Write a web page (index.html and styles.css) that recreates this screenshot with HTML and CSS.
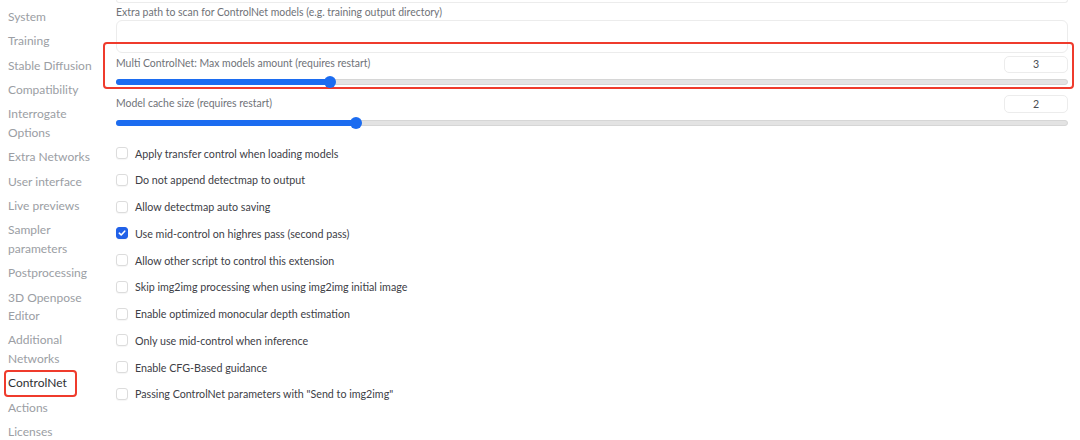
FILE: index.html
```html
<!DOCTYPE html>
<html>
<head>
<meta charset="utf-8">
<link rel="stylesheet" href="styles.css">
</head>
<body>
<div class="app">
  <nav class="sidebar">
    <div class="nav-item">System</div>
    <div class="nav-item">Training</div>
    <div class="nav-item">Stable Diffusion</div>
    <div class="nav-item">Compatibility</div>
    <div class="nav-item">Interrogate Options</div>
    <div class="nav-item">Extra Networks</div>
    <div class="nav-item">User interface</div>
    <div class="nav-item">Live previews</div>
    <div class="nav-item">Sampler parameters</div>
    <div class="nav-item">Postprocessing</div>
    <div class="nav-item">3D Openpose Editor</div>
    <div class="nav-item">Additional Networks</div>
    <div class="nav-item active">ControlNet</div>
    <div class="nav-item">Actions</div>
    <div class="nav-item">Licenses</div>
  </nav>
  <main class="main">
    <div class="prev-box"></div>
    <div class="field">
      <div class="label">Extra path to scan for ControlNet models (e.g. training output directory)</div>
      <div class="textbox"></div>
    </div>
    <div class="highlight">
      <div class="slider-field">
        <div class="slider-head">
          <div class="label">Multi ControlNet: Max models amount (requires restart)</div>
          <div class="numbox">3</div>
        </div>
        <div class="track"><div class="fill" style="width:22.5%"><span class="thumb"></span></div></div>
      </div>
    </div>
    <div class="slider-field second">
      <div class="slider-head">
        <div class="label">Model cache size (requires restart)</div>
        <div class="numbox">2</div>
      </div>
      <div class="track"><div class="fill" style="width:25.3%"><span class="thumb"></span></div></div>
    </div>
    <div class="checks">
      <label class="check"><span class="box"></span>Apply transfer control when loading models</label>
      <label class="check"><span class="box"></span>Do not append detectmap to output</label>
      <label class="check"><span class="box"></span>Allow detectmap auto saving</label>
      <label class="check"><span class="box checked"><svg viewBox="0 0 12 12" width="12" height="12"><path d="M3.3 6.2 L5.2 8 L8.7 4.2" fill="none" stroke="#fff" stroke-width="1.6" stroke-linecap="round" stroke-linejoin="round"/></svg></span>Use mid-control on highres pass (second pass)</label>
      <label class="check"><span class="box"></span>Allow other script to control this extension</label>
      <label class="check"><span class="box"></span>Skip img2img processing when using img2img initial image</label>
      <label class="check"><span class="box"></span>Enable optimized monocular depth estimation</label>
      <label class="check"><span class="box"></span>Only use mid-control when inference</label>
      <label class="check"><span class="box"></span>Enable CFG-Based guidance</label>
      <label class="check"><span class="box"></span>Passing ControlNet parameters with "Send to img2img"</label>
    </div>
  </main>
</div>
</body>
</html>
```
FILE: styles.css
```css
* { box-sizing: border-box; }
html, body { margin: 0; padding: 0; background: #fff; }
body {
  font-family: "Source Sans Pro", Lato, "Liberation Sans", sans-serif;
  width: 1080px;
  height: 440px;
  overflow: hidden;
}
.app {
  display: flex;
  align-items: flex-start;
}
.sidebar {
  width: 106px;
  padding: 7.8px 0 0 8px;
  display: flex;
  flex-direction: column;
  gap: 6px;
  flex: none;
}
.nav-item {
  width: 92px;
  font-size: 12px;
  line-height: 18.4px;
  color: #9b9ea4;
}
.nav-item.active {
  color: #2e2f33;
  width: 73px;
  margin: -4px 0 -4px -4px;
  padding: 2px 2px;
  border: 2px solid #ef3b2c;
  border-radius: 4px;
}
.main {
  flex: 1;
  padding-right: 12px;
  display: flex;
  flex-direction: column;
}
.prev-box {
  margin-left: 10px;
  height: 3px;
  border: 1px solid #ececec;
  border-top: none;
  border-radius: 0 0 5px 5px;
}
.field { padding: 2px 0 0 10px; }
.label {
  font-size: 10.45px;
  line-height: 14px;
  color: #6f7278;
}
.textbox {
  margin-top: 1px;
  height: 33px;
  border: 1px solid #ececec;
  border-radius: 6px;
  background: #fff;
}
.highlight {
  margin-top: -11px;
  margin-left: -3px;
  margin-right: -6px;
  border: 2px solid #ef3b2c;
  border-radius: 4px;
  padding: 12px 4px 2px 11px;
}
.slider-field.second { margin-top: 6px; padding-left: 10px; }
.slider-head {
  display: flex;
  align-items: flex-start;
  justify-content: space-between;
  height: 17px;
}
.second .slider-head { height: 18px; }
.second .slider-head .label { margin-top: 1px; }
.numbox {
  width: 64px;
  height: 17px;
  border: 1px solid #ececec;
  border-radius: 5px;
  font-size: 10.6px;
  line-height: 15px;
  text-align: center;
  color: #4a4d52;
}
.second .numbox { height: 18px; line-height: 16px; }
.track {
  margin-top: 6px;
  height: 6px;
  background: #e3e3e3;
  border: 1px solid #d6d6d6;
  border-radius: 3px;
  position: relative;
}
.second .track { margin-top: 7px; }
.fill {
  height: 6px;
  margin: -1px 0 0 -1px;
  background: #1c6cf0;
  border-radius: 3px;
  position: relative;
}
.thumb {
  position: absolute;
  right: -6px;
  top: -3px;
  width: 12px;
  height: 12px;
  border-radius: 50%;
  background: #1c6cf0;
}
.checks {
  margin-top: 20px;
  padding-left: 10px;
  display: flex;
  flex-direction: column;
  gap: 12.78px;
}
.check {
  display: flex;
  align-items: center;
  height: 14px;
  font-size: 10.7px;
  color: #3d4046;
}
.box {
  width: 12px;
  height: 12px;
  border: 1px solid #dcdcdc;
  border-radius: 3px;
  background: #fff;
  margin-right: 7px;
  flex: none;
  display: flex;
  align-items: center;
  justify-content: center;
  box-shadow: 0 1px 1px rgba(0,0,0,0.04);
}
.box.checked {
  background: #2161e8;
  border-color: #2161e8;
}
.box.checked svg { display: block; margin: -1px; }
```
